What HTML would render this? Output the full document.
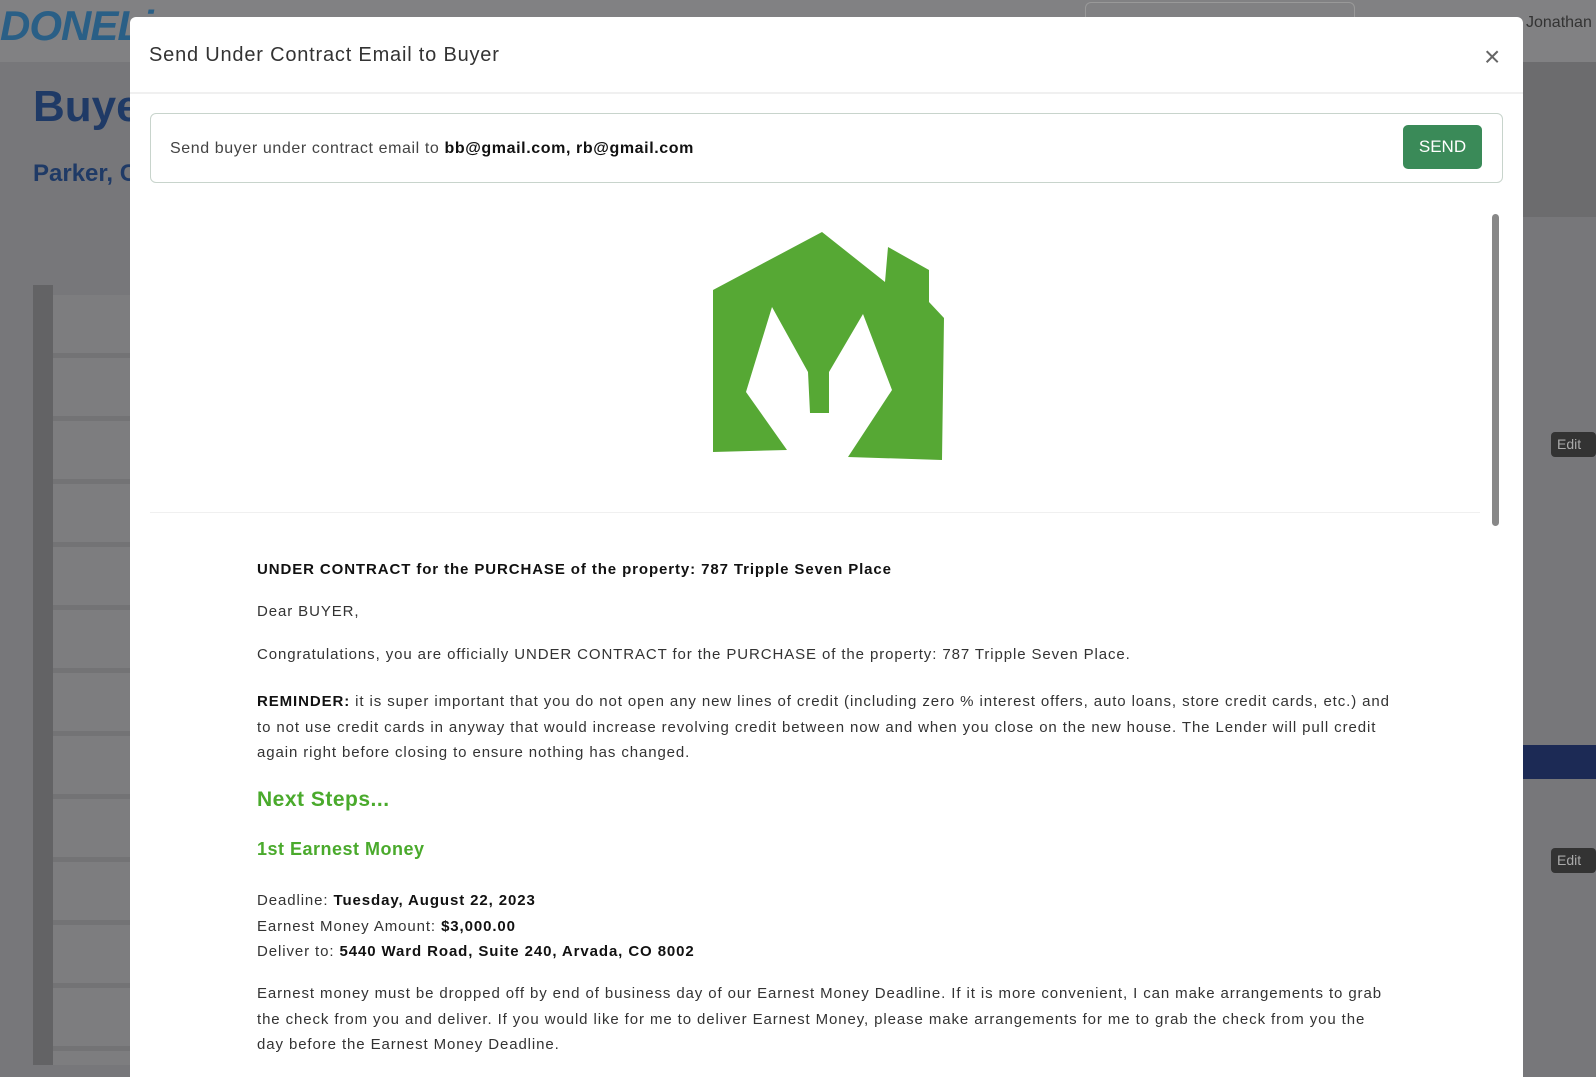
<!DOCTYPE html>
<html><head><meta charset="utf-8"><style>
*{margin:0;padding:0;box-sizing:border-box}
body{width:1596px;height:1064px;overflow:hidden;background:#77777a;font-family:"Liberation Sans",sans-serif;position:relative}
.abs{position:absolute}
.modal{left:130px;top:17px;width:1393px;height:1060px;background:#fff;border-radius:6px 6px 0 0}
.t{position:absolute;left:257px;font-size:15px;color:#333;white-space:nowrap;letter-spacing:0.9px}
b{color:#111}
</style></head><body>
<div class="abs" style="left:0;top:0;width:1596px;height:62px;background:#818183"></div>
<div class="abs" style="left:0;top:2px;font:italic bold 42px 'Liberation Sans';color:#2a5f86;letter-spacing:-1px">DONELi</div>
<div class="abs" style="left:1085px;top:2px;width:270px;height:30px;border:1px solid #999;border-radius:6px"></div>
<div class="abs" style="left:1526px;top:14px;font-size:16px;color:#333">Jonathan</div>
<div class="abs" style="left:33px;top:82px;font:bold 44px 'Liberation Sans';color:#1f3a66">Buye</div>
<div class="abs" style="left:33px;top:160px;font:bold 24px 'Liberation Sans';color:#1f3a66">Parker, C</div>
<div class="abs" style="left:33px;top:285px;width:20px;height:780px;background:#636365"></div>
<div class="abs" style="left:53px;top:295px;width:80px;height:770px;background:repeating-linear-gradient(#7d7d7f 0 58px,#737375 58px 63px)"></div>
<div class="abs" style="left:1522px;top:62px;width:74px;height:155px;background:#6c6c6e"></div>
<div class="abs" style="left:1522px;top:745px;width:74px;height:34px;background:#1c2a55"></div>
<div class="abs" style="left:1551px;top:432px;width:45px;height:25px;background:#333;border-radius:4px;color:#aaa;font-size:14px;padding:4px 6px">Edit</div>
<div class="abs" style="left:1551px;top:848px;width:45px;height:25px;background:#333;border-radius:4px;color:#aaa;font-size:14px;padding:4px 6px">Edit</div>
<div class="abs modal">
<div class="abs" style="left:19px;top:27px;font-size:20px;color:#333;letter-spacing:0.8px">Send Under Contract Email to Buyer</div>
<div class="abs" style="left:1354px;top:26px;font-size:28px;color:#666;line-height:1">×</div>
<div class="abs" style="left:0;top:75px;width:1393px;height:2px;background:#f0f0f0"></div>
<div class="abs" style="left:20px;top:96px;width:1353px;height:70px;border:1.5px solid #c8d4cc;border-radius:6px"></div>
<div class="abs" style="left:40px;top:123px;font-size:16px;color:#444;letter-spacing:0.6px">Send buyer under contract email to <b>bb@gmail.com, rb@gmail.com</b></div>
<div class="abs" style="left:1273px;top:108px;width:79px;height:44px;background:#3a8a58;border-radius:5px;color:#fff;font-size:17px;text-align:center;line-height:44px">SEND</div>
<div class="abs" style="left:1362px;top:197px;width:7px;height:312px;background:#888;border-radius:4px"></div>
<div class="abs" style="left:20px;top:495px;width:1330px;height:1px;background:#f0f0f0"></div>
</div>
<svg class="abs" style="left:0;top:0" width="1596" height="1064"><polygon fill="#56a834" points="713,290 822,232 885,282 888,247 929,270 929,302 944,318 942,460 848,457 892,390 863,314 829,372 829,413 810,413 808,372 772,307 746,392 787,450 713,452"/></svg>
<div class="t" style="top:561px;font-weight:bold;color:#111">UNDER CONTRACT for the PURCHASE of the property: 787 Tripple Seven Place</div>
<div class="t" style="top:603px">Dear BUYER,</div>
<div class="t" style="top:646px">Congratulations, you are officially UNDER CONTRACT for the PURCHASE of the property: 787 Tripple Seven Place.</div>
<div class="t" style="top:689px;line-height:25.5px;white-space:normal;width:1145px"><b>REMINDER:</b> it is super important that you do not open any new lines of credit (including zero % interest offers, auto loans, store credit cards, etc.) and to not use credit cards in anyway that would increase revolving credit between now and when you close on the new house. The Lender will pull credit again right before closing to ensure nothing has changed.</div>
<div class="t" style="top:788px;font-size:21px;font-weight:bold;color:#4aaa2c;letter-spacing:0.5px">Next Steps...</div>
<div class="t" style="top:839px;font-size:18px;font-weight:bold;color:#4aaa2c;letter-spacing:0.5px">1st Earnest Money</div>
<div class="t" style="top:888px;line-height:25.5px">Deadline: <b>Tuesday, August 22, 2023</b><br>Earnest Money Amount: <b>$3,000.00</b><br>Deliver to: <b>5440 Ward Road, Suite 240, Arvada, CO 8002</b></div>
<div class="t" style="top:981px;line-height:25.5px;white-space:normal;width:1132px">Earnest money must be dropped off by end of business day of our Earnest Money Deadline. If it is more convenient, I can make arrangements to grab the check from you and deliver. If you would like for me to deliver Earnest Money, please make arrangements for me to grab the check from you the day before the Earnest Money Deadline.</div>
</body></html>
